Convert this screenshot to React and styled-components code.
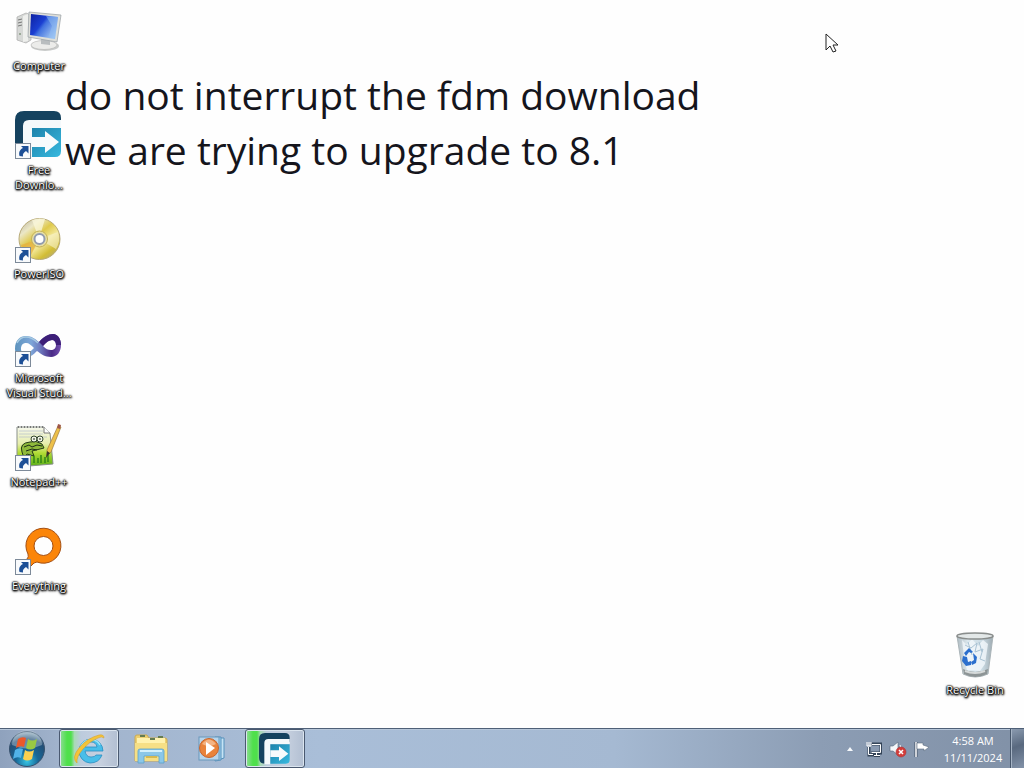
import React, { useState } from "react"
import styled, { createGlobalStyle } from "styled-components"

const GlobalStyle = createGlobalStyle`
  html, body, #root {
    height: 100%;
    margin: 0;
  }
  body {
    overflow: hidden;
    background: #fefefe;
    font-family: "Open Sans", "Noto Sans", sans-serif;
  }
  button {
    font: inherit;
    padding: 0;
    border: 0;
    background: none;
  }
`;

const Screen = styled.div`
  display: flex;
  flex-direction: column;
  height: 100vh;
`;

const Desktop = styled.main`
  position: relative;
  flex: 1;
  display: flex;
  justify-content: space-between;
  padding-right: 10px;
`;

// the note is part of the wallpaper, so it sits under the icons
const Wallpaper = styled.p`
  position: absolute;
  top: 67px;
  left: 65px;
  margin: 0;
  color: #15151c;
  font-size: 39px;
  line-height: 55px;
  white-space: pre-line;
`;

const IconColumn = styled.div`
  position: relative;
  display: flex;
  flex-direction: column;
  justify-content: ${props => props.$bottom ? "flex-end" : "flex-start"};
  width: 78px;
`;

const Shortcut = styled.button`
  display: flex;
  flex-direction: column;
  align-items: center;
  gap: 3px;
  height: 104px;
  padding-top: 7px;
`;

const ShortcutLabel = styled.span`
  color: #fff;
  font-size: 11px;
  line-height: 15px;
  white-space: pre-line;
  text-shadow: 0 0 1px #000, 0 0 2px #000, 0 0 2px #000, 0 1px 2px #000, 1px 1px 2px #000, 0 1px 3px #444;
`;

const Pointer = styled.svg`
  position: absolute;
  top: 33px;
  left: 825px;
  pointer-events: none;
`;

const Bar = styled.footer`
  display: flex;
  align-items: stretch;
  height: 39px;
  border-top: 1px solid #4f6077;
  box-shadow: inset 0 1px 0 #b7c7da;
  background: linear-gradient(90deg, #8fa2bd 0, #a1b3cc 60px, #a9bed8 320px, #a5b9d2 60%, #8c9db4 80%, #8191a7 100%);
`;

const Start = styled.button`
  display: flex;
  align-items: center;
  justify-content: center;
  width: 54px;
  margin-right: 5px;
`;

const Tasks = styled.nav`
  display: flex;
  flex: 1;
  gap: 2px;
`;

const Task = styled.button`
  display: flex;
  align-items: center;
  justify-content: center;
  box-sizing: border-box;
  width: 60px;
  border-radius: 3px;
  ${props => props.$running && `
    border: 1px solid #4a5970;
    box-shadow: inset 0 0 0 1px #dbe5ef;
    background: linear-gradient(90deg, #8fdc98 0, #4fe04c 12%, #4fdf4c 19%, #a9d9b6 25%, #bccbdd 36%, #c6d0df 70%, #b2bfd2 100%);
  `}
`;

const Tray = styled.div`
  display: flex;
  align-items: center;
`;

const TrayButton = styled.button`
  display: flex;
  align-items: center;
  justify-content: center;
  width: 24px;
  height: 24px;
`;

const Clock = styled.time`
  width: 74px;
  margin-left: 2px;
  color: #fff;
  font-size: 11px;
  line-height: 17px;
  text-align: center;
  white-space: pre-line;
`;

const ShowDesktop = styled.button`
  align-self: stretch;
  width: 14px;
  border-left: 1px solid #46566b;
  box-shadow: inset 1px 0 0 #a6b4c5;
  background: linear-gradient(160deg, #8b9bb0, #59697f 45%, #8292a8);
`;

const Arrow = () => (
  <g>
    <rect x="0.5" y="32.5" width="15" height="15" fill="#f8fafc" stroke="#7d8a99" />
    <path d="M6 35h7.500v7.500l-2.500-2.500c-2.500 1.500-3.500 3-3 5.500l-3.500-.5c-1-4 .5-6.500 3.500-8z" fill="#1c4f96" />
  </g>
);

const ComputerIcon = () => (
  <svg width="48" height="48" viewBox="0 0 48 48">
    <defs>
      <linearGradient id="screen" x1="0" x2="1" y1="0" y2=".7">
        <stop offset="0" stopColor="#0c1fa0" />
        <stop offset=".45" stopColor="#1b3fd2" />
        <stop offset=".55" stopColor="#4272df" />
        <stop offset="1" stopColor="#a9cdf5" />
      </linearGradient>
    </defs>
    <path d="M2 10l9-4 5 2v25l-5 3-9-3z" fill="#d6d8d6" stroke="#aaa" strokeWidth=".7" />
    <path d="M8 9l5-2v27l-5 1z" fill="#eeefed" />
    <path d="M3 13l4-1M3 16l4-1M3 19l4-1" stroke="#777" />
    <circle cx="5" cy="27" r="1" fill="#879a83" />
    <ellipse cx="30" cy="39" rx="14" ry="5" fill="#c9cbca" />
    <ellipse cx="29" cy="38" rx="13" ry="4.500" fill="#ececea" stroke="#b2b2b0" strokeWidth=".6" />
    <path d="M26 31l9 1v6l-9-1z" fill="#b9bdbf" />
    <path d="M14 5l32 3-4 27-29-5z" fill="#dedfda" stroke="#969da3" strokeWidth=".7" />
    <path d="M16 7l27 3-3 22-25-4z" fill="url(#screen)" />
    <path d="M31 9l12 1-3 22-7-1 4-12z" fill="#8fbcf1" opacity=".55" />
  </svg>
);

const FdmMark = () => (
  <g>
    <defs>
      <linearGradient id="fdm" x1="0" x2="1" y1="0" y2="1">
        <stop offset="0" stopColor="#1d83ab" />
        <stop offset="1" stopColor="#38b9df" />
      </linearGradient>
    </defs>
    <path d="M0 34V9q0-9 9-9h30q7 0 7 7v6H14v33H9q-9 0-9-9z" fill="#15425f" />
    <path d="M8 47V15q0-6 6-6h32v8H17v30z" fill="#f5f9fb" />
    <path d="M17 17h29v23q0 6-6 6H17z" fill="url(#fdm)" />
    <path d="M17 26h13v-6l14 11-14 11v-6H17z" fill="#f8fbfc" />
  </g>
);

const FdmIcon = () => (
  <svg width="48" height="48" viewBox="0 0 48 48"><FdmMark /><Arrow /></svg>
);

const PowerIsoIcon = () => (
  <svg width="48" height="48" viewBox="0 0 48 48">
    <defs>
      <linearGradient id="disc" x1=".1" x2=".9" y1="0" y2="1">
        <stop offset="0" stopColor="#bdb6a4" />
        <stop offset=".22" stopColor="#ebe7c6" />
        <stop offset=".42" stopColor="#dfc94b" />
        <stop offset=".6" stopColor="#f2e796" />
        <stop offset=".8" stopColor="#d2bd35" />
        <stop offset="1" stopColor="#a9a48f" />
      </linearGradient>
    </defs>
    <circle cx="24.500" cy="24" r="20.500" fill="url(#disc)" stroke="#b8aa77" />
    <path d="M24 24L17 5a21 21 0 0 1 13-1z" fill="#fbf8dc" opacity=".75" />
    <path d="M24 24L43 17a20 20 0 0 1-2 17z" fill="#f8f4cf" opacity=".6" />
    <path d="M24 24L6 30l2 5 7 7z" fill="#e5ad3c" opacity=".7" />
    <circle cx="24.500" cy="24" r="8" fill="#e7dfa5" stroke="#c4b256" />
    <circle cx="24.500" cy="24" r="5" fill="#fff" stroke="#919baf" strokeWidth="2" />
    <Arrow />
  </svg>
);

const VisualStudioIcon = () => (
  <svg width="48" height="48" viewBox="0 0 48 48">
    <defs>
      <linearGradient id="loop" x1="0" x2="1">
        <stop offset="0" stopColor="#5d93bd" />
        <stop offset=".35" stopColor="#7da6d8" />
        <stop offset=".55" stopColor="#6d78bd" />
        <stop offset=".8" stopColor="#4a2a86" />
        <stop offset="1" stopColor="#7450b0" />
      </linearGradient>
    </defs>
    <path d="M0 30C0 21 5 17 11 17c6 0 9 3 13 6 4-5 9-8 14-8 5 0 8 5 8 11 0 7-4 12-10 12-6 0-10-3-14-6-3 3-6 6-11 6-7 0-11-3-11-8zm6 0c0 3 2 4 5 4 3 0 5-2 8-5-3-3-5-5-8-5-3 0-5 2-5 6zm22-3c3 3 5 4 8 4 3 0 5-2 5-5s-2-5-4-5c-3 0-6 2-9 6z" fill="url(#loop)" fillRule="evenodd" />
    <path d="M24 23q7-8 14-8c5 0 8 5 8 11l-5 0q0-5-4-5-4 0-9 6z" fill="#3d1f78" />
    <path d="M2 24q3-6 9-6 6 0 12 6" fill="none" stroke="#a5cae2" strokeWidth="1.500" />
    <Arrow />
  </svg>
);

const NotepadIcon = () => (
  <svg width="48" height="48" viewBox="0 0 48 48">
    <defs>
      <linearGradient id="grass" x1="0" x2="0" y1="0" y2="1">
        <stop offset="0" stopColor="#f6f8ed" />
        <stop offset=".42" stopColor="#e7eeac" />
        <stop offset=".65" stopColor="#b2dc35" />
        <stop offset="1" stopColor="#54ab16" />
      </linearGradient>
    </defs>
    <path d="M2 4h27l6 6 3 31-36 3z" fill="url(#grass)" stroke="#89908b" />
    <path d="M29 4v6h6" fill="#fff" stroke="#777" />
    <path d="M4 8h24M4 11h24M4 14h28" stroke="#b5bdc8" strokeWidth=".7" />
    <path d="M3 4h25" stroke="#777" strokeWidth="2" strokeDasharray="1 2" />
    <path d="M7 29q-3-9 8-10 6-2 12 2l2 4-4 1-8 2 2 5-7-2-3 4z" fill="#8fb93b" stroke="#243b17" strokeWidth="1" />
    <circle cx="19" cy="16" r="3" fill="#f2f5e9" stroke="#30442b" />
    <circle cx="25" cy="16" r="3" fill="#f2f5e9" stroke="#30442b" />
    <path d="M18 16h2m4 0h2M9 24l5-2 3 2 5-2 5 1M11 28l6-2 5 1" stroke="#1e2d17" strokeWidth="1" fill="none" />
    <path d="M19 40v-7m4 7v-5m3 5v-8m4 8v-6m3 5v-8" stroke="#267c15" strokeWidth="1.300" />
    <path d="M43 3l3 1-10 25-4 4v-6z" fill="#edc04a" stroke="#9b7841" strokeWidth=".7" />
    <path d="M42 5l1-4 3 1-1 4z" fill="#9e5747" />
    <path d="M32 28l3 2-4 5z" fill="#393329" />
    <Arrow />
  </svg>
);

const EverythingIcon = () => (
  <svg width="48" height="48" viewBox="0 0 48 48">
    <path d="M13 27A17.500 17.500 0 1 1 22 35q-3 0-6 4l-5 5-6-6 7-6q2-2 1-5z" fill="#fb8509" stroke="#a44f13" />
    <circle cx="28.500" cy="19" r="9.500" fill="#fefefe" stroke="#a44f13" />
    <Arrow />
  </svg>
);

const RecycleIcon = () => (
  <svg width="48" height="48" viewBox="0 0 48 48">
    <defs>
      <linearGradient id="glass" x1="0" x2="1">
        <stop offset="0" stopColor="#aebbc2" />
        <stop offset=".3" stopColor="#dce8ee" />
        <stop offset=".7" stopColor="#cbdbe4" />
        <stop offset="1" stopColor="#9eabb2" />
      </linearGradient>
    </defs>
    <path d="M6 5h36l-5 38q-13 6-25 0z" fill="url(#glass)" stroke="#aab4b8" />
    <path d="M11 9l5 5 5-6 6 7 5-6 5 4-3 20-5 7-13-1-3-13z" fill="#f3f8fb" opacity=".8" />
    <path d="M14 14l6 3 6-5-2 9 8-3-3 10 5 2M17 11l4 13m7-13l3 10" stroke="#a9c2d3" fill="none" />
    <path d="M12 38q12 6 25 0l-1 5q-12 6-23 0z" fill="#8d9495" />
    <path d="M14 40q10 4 20 0" stroke="#d6dada" fill="none" strokeWidth="2" />
    <ellipse cx="24" cy="5" rx="18" ry="3" fill="#e3e8e8" stroke="#898d8c" strokeWidth="1.500" />
    <path d="M13 22l5-5 4 4-2 1-2-1-3 4zM12 25l4 1 1 5 3-1v4l-5 1-4-5zM22 22l4 4-1 6-4 2-1-3 3-2z" fill="#2b6fcd" />
  </svg>
);

const StartOrb = () => (
  <svg width="38" height="38" viewBox="0 0 38 38">
    <defs>
      <radialGradient id="orb" cx=".5" cy=".85" r=".8">
        <stop offset="0" stopColor="#36c5e5" />
        <stop offset=".4" stopColor="#176797" />
        <stop offset=".8" stopColor="#234e75" />
        <stop offset="1" stopColor="#8ba6ba" />
      </radialGradient>
    </defs>
    <circle cx="19" cy="19" r="17.500" fill="url(#orb)" stroke="#36506c" />
    <path d="M4 15a15 15 0 0 1 30 0q-15 7-30 0" fill="#d0dce4" opacity=".4" />
    <path d="M10 9q4-3 8-1l-2 9q-4-2-8 1z" fill="#ec592a" />
    <path d="M20 9q4 3 9 0l-2 9q-5 3-9 0z" fill="#99c943" />
    <path d="M7 20q4-3 8-1l-2 9q-4-2-8 1z" fill="#51b3e8" />
    <path d="M17 20q4 3 9 0l-2 9q-5 3-9 0z" fill="#fbd050" />
  </svg>
);

const ExplorerEIcon = () => (
  <svg width="34" height="34" viewBox="0 0 34 34">
    <path d="M30 23q-3 8-12 8A12 12 0 1 1 31 19H13q1 6 6 6 4 0 5-2zM13 15h12q-1-5-6-5-5 0-6 5z" fill="#48bee9" stroke="#298ec0" strokeWidth=".8" />
    <path d="M8 17q2-8 9-9 8-1 11 5" fill="none" stroke="#9ce3f7" strokeWidth="1.500" />
    <path d="M5 31Q-1 26 7 16T27 3q5-1 5 3-2-2-6 0Q18 9 11 17T5 31z" fill="#f4c338" stroke="#d39d26" strokeWidth=".5" />
  </svg>
);

const FolderIcon = () => (
  <svg width="34" height="34" viewBox="0 0 34 34">
    <path d="M1 5q0-2 2-2h10l2 3h16q2 0 2 2v21H1z" fill="#edcf70" stroke="#caaa55" />
    <path d="M3 6h28v20H3z" fill="#fff2ae" />
    <path d="M6 4h5M16 7h5M24 5h5" stroke="#657c50" strokeWidth="2" />
    <path d="M1 11h32v18H1z" fill="#f6df85" />
    <path d="M4 31V19q0-2 2-2h22q2 0 2 2v12h-5v-7H10v7z" fill="#8bc7e8" stroke="#5ca2cb" strokeWidth=".8" />
    <path d="M6 19h22" stroke="#d4f0fb" strokeWidth="2" />
    <path d="M12 25h11" stroke="#d5b952" strokeWidth="2" />
  </svg>
);

const MediaIcon = () => (
  <svg width="30" height="28" viewBox="0 0 30 28">
    <path d="M20 3h6v20l-6 2z" fill="#c4e3f5" stroke="#5791bb" />
    <path d="M17 2h6v23l-6 1z" fill="#9fd0ee" stroke="#5791bb" />
    <rect x="1" y="2" width="20" height="23" fill="#b8d5eb" stroke="#6998bc" />
    <circle cx="11" cy="13" r="9.500" fill="#e9833b" stroke="#c7652e" />
    <path d="M4 9q7-9 14 0-7 4-14 0z" fill="#f3b485" />
    <path d="M8 7l9 6-9 7z" fill="#fff" />
  </svg>
);

const FdmTaskIcon = () => (
  <svg width="32" height="32" viewBox="0 0 48 48"><FdmMark /></svg>
);

const UpIcon = () => (
  <svg width="6" height="4" viewBox="0 0 6 4"><path d="M0 4l3-4 3 4z" fill="#f6f9fc" /></svg>
);

const NetworkIcon = () => (
  <svg width="16" height="16" viewBox="0 0 16 16" fill="none">
    <path d="M5 3h10v9H5M8 15h6M11 12v3M3 6v8h5" stroke="#344458" strokeWidth="3" />
    <path d="M6 3.500h8.500v8H5.500M8 14.500h6M10.500 12v2M2.500 6v7.500H7M1 1v4h4V1M3 1v4" stroke="#fff" />
  </svg>
);

const SpeakerIcon = () => (
  <svg width="18" height="18" viewBox="0 0 18 18">
    <path d="M1 6h3l5-4v13l-5-4H1z" fill="#f5f7fa" stroke="#58697e" strokeWidth=".6" />
    <path d="M11 5q2 3 0 6" fill="none" stroke="#f5f7fa" />
    <circle cx="12" cy="12" r="5" fill="#d33d3a" stroke="#a93537" strokeWidth=".6" />
    <path d="M10 10l4 4m0-4l-4 4" stroke="#fff" strokeWidth="1.500" />
  </svg>
);

const FlagIcon = () => (
  <svg width="16" height="16" viewBox="0 0 16 16">
    <path d="M2 1v15" stroke="#435267" strokeWidth="3" />
    <path d="M2 1v15" stroke="#fff" strokeWidth="1.500" />
    <path d="M3 2h6v2l6 2-5 4V8H3z" fill="#fff" stroke="#5b6b80" strokeWidth=".6" />
  </svg>
);

const shortcuts = [
  { label: "Computer", Icon: ComputerIcon },
  { label: "Free\nDownlo...", Icon: FdmIcon },
  { label: "PowerISO", Icon: PowerIsoIcon },
  { label: "Microsoft\nVisual Stud...", Icon: VisualStudioIcon },
  { label: "Notepad++", Icon: NotepadIcon },
  { label: "Everything", Icon: EverythingIcon },
];

const tasks = [
  { name: "Internet Explorer", Icon: ExplorerEIcon, running: true },
  { name: "Windows Explorer", Icon: FolderIcon },
  { name: "Windows Media Player", Icon: MediaIcon },
  { name: "Free Download Manager", Icon: FdmTaskIcon, running: true },
];

const tray = [
  { name: "Show hidden icons", Icon: UpIcon },
  { name: "Network", Icon: NetworkIcon },
  { name: "Volume muted", Icon: SpeakerIcon },
  { name: "Action Center", Icon: FlagIcon },
];

const DesktopShortcut = ({label, Icon}) => (
  <Shortcut>
    <Icon />
    <ShortcutLabel>{label}</ShortcutLabel>
  </Shortcut>
);

const Taskbar = () => {
  const [running, setRunning] = useState(tasks.filter(t => t.running).map(t => t.name));

  const open = name => {
    if (!running.includes(name)) setRunning([...running, name])
  };

  return <Bar>
    <Start aria-label="Start"><StartOrb /></Start>
    <Tasks>
      {tasks.map(({name, Icon}) => (
        <Task key={name} aria-label={name} $running={running.includes(name)} onClick={() => open(name)}>
          <Icon />
        </Task>
      ))}
    </Tasks>
    <Tray>
      {tray.map(({name, Icon}) => (
        <TrayButton key={name} aria-label={name}><Icon /></TrayButton>
      ))}
      <Clock dateTime="2024-11-11T04:58">{"4:58 AM\n11/11/2024"}</Clock>
      <ShowDesktop aria-label="Show desktop" />
    </Tray>
  </Bar>
}

const App = () => (
  <Screen>
    <GlobalStyle />
    <Desktop>
      <Wallpaper>{"do not interrupt the fdm download\nwe are trying to upgrade to 8.1"}</Wallpaper>
      <IconColumn>
        {shortcuts.map(s => <DesktopShortcut key={s.label} {...s} />)}
      </IconColumn>
      <IconColumn $bottom>
        <DesktopShortcut label="Recycle Bin" Icon={RecycleIcon} />
      </IconColumn>
      <Pointer width="14" height="21" viewBox="0 0 14 21">
        <path d="M1 1v16l4-4 3 6 3-1-3-6h5z" fill="#fff" stroke="#222" />
      </Pointer>
    </Desktop>
    <Taskbar />
  </Screen>
);

export default App;
